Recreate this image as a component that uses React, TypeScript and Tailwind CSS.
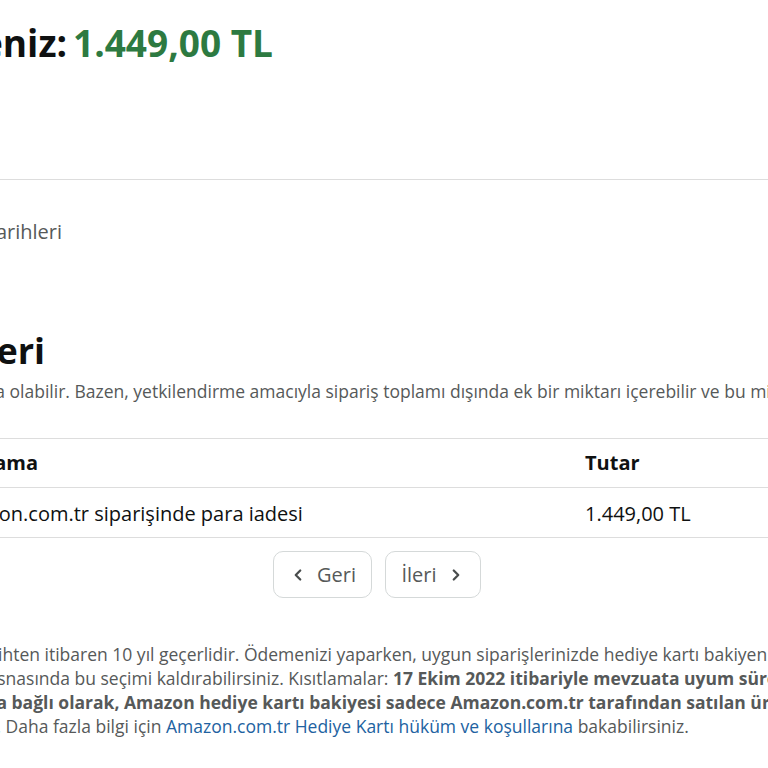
import { ChevronLeft, ChevronRight } from "lucide-react";
import type { ReactNode } from "react";

// right-aligned clip: shows only the tail of a phrase that runs off the left edge
function Cut({ className, children }: { className: string; children: ReactNode }) {
  return (
    <span className={`flex shrink-0 justify-end overflow-hidden ${className}`}>
      <span className="shrink-0 whitespace-pre">{children}</span>
    </span>
  );
}

export default function App() {
  return (
    <div
      className="h-[768px] w-[768px] overflow-hidden bg-white text-[#0f1111]"
      style={{ fontFamily: '"Open Sans", "Noto Sans", sans-serif' }}
    >
      {/* Balance */}
      <div className="flex whitespace-pre pt-[21px] text-[37px] font-bold leading-[44px]">
        <Cut className="w-[67px]">Hediye kartı bakiyeniz:</Cut>
        <span className="ml-[6px] text-[#2d7a41]">1.449,00 TL</span>
      </div>

      <div className="mt-[114px] h-px w-full bg-[#dddddd]" />

      <div className="mt-[38px] flex text-[20px] leading-[28px] text-[#565959]">
        <Cut className="w-[62px]">Hediye kartı bakiyesi son kullanma tarihleri</Cut>
      </div>

      {/* Transactions */}
      <div className="mt-[83px] flex text-[36px] font-bold leading-[44px]">
        <Cut className="w-[45px]">Hediye kartı bakiyesi işlemleri</Cut>
      </div>
      <div className="mt-[4px] flex whitespace-pre text-[17.5px] leading-[28px] text-[#565959]">
        <Cut className="w-[5px]">Bekleyen işlemler, sipariş tutarından farklı bir tutarda</Cut>
        <span> olabilir. Bazen, yetkilendirme amacıyla sipariş toplamı dışında ek bir miktarı içerebilir ve bu miktar daha sonra iade edilir.</span>
      </div>

      <div className="mt-[33px] text-[20px]">
        <div className="grid h-[50px] grid-cols-[585px_1fr] items-center border-y border-[#dddddd] font-bold">
          <div className="flex">
            <Cut className="w-[38px]">Açıklama</Cut>
          </div>
          <div>Tutar</div>
        </div>
        <div className="grid h-[50px] grid-cols-[585px_1fr] items-center border-b border-[#dddddd] pt-[2px]">
          <div className="flex whitespace-pre">
            <Cut className="w-[89px]">Amazon.com.tr</Cut>
            <span> siparişinde para iadesi</span>
          </div>
          <div>1.449,00 TL</div>
        </div>
      </div>

      {/* Pager */}
      <div className="mt-[13px] flex gap-[13px] pl-[273px] text-[20px] text-[#565959]">
        <button className="flex h-[47px] w-[99px] items-center justify-center gap-[10px] rounded-[10px] border border-[#d5d9d9] bg-white">
          <ChevronLeft size={18} strokeWidth={3} className="text-[#494d4d]" />
          <span>Geri</span>
        </button>
        <button className="flex h-[47px] w-[96px] items-center justify-center gap-[10px] rounded-[10px] border border-[#d5d9d9] bg-white">
          <span>İleri</span>
          <ChevronRight size={18} strokeWidth={3} className="text-[#494d4d]" />
        </button>
      </div>

      {/* Terms */}
      <div className="mt-[44px] text-[17.5px] leading-[24px] text-[#565959]">
        <div className="flex whitespace-pre">
          <Cut className="w-[40px]">Hediye kartı bakiyesi, yüklendiği tarihten</Cut>
          <span> itibaren 10 yıl geçerlidir. Ödemenizi yaparken, uygun siparişlerinizde hediye kartı bakiyenizin kullanılması otomatik olarak seçilir;</span>
        </div>
        <div className="flex whitespace-pre">
          <Cut className="w-[70px]">ödeme esnasında</Cut>
          <span> bu seçimi kaldırabilirsiniz. Kısıtlamalar: </span>
          <span className="font-bold">17 Ekim 2022 itibariyle mevzuata uyum sürecine</span>
        </div>
        <div className="flex whitespace-pre font-bold">
          <Cut className="w-[7px]">tamamlanmasına</Cut>
          <span> bağlı olarak, Amazon hediye kartı bakiyesi sadece Amazon.com.tr tarafından satılan ürünlerde kullanılabilir.</span>
        </div>
        <div className="flex whitespace-pre">
          <Cut className="w-[1px]">kullanılabilir.</Cut>
          <span> Daha fazla bilgi için </span>
          <a href="#" className="text-[#2162a1]">Amazon.com.tr Hediye Kartı hüküm ve koşullarına</a>
          <span> bakabilirsiniz.</span>
        </div>
      </div>
    </div>
  );
}
